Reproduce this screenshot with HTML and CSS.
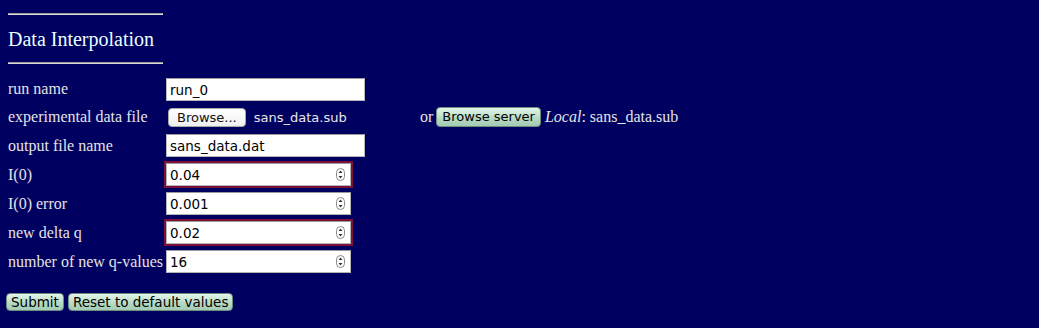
FILE: index.html
```html
<!DOCTYPE html>
<html lang="en">
    <head>
        <meta charset="UTF-8" />
        <title>Data Interpolation</title>
        <link rel="stylesheet" href="styles.css">
    </head>
    <body>
        <!-- 제목 -->
        <hr class="rule" />
        <h3 class="title">Data Interpolation</h3>
        <hr class="rule" />

        <!-- 입력폼 -->
        <form class="frm">
            <table class="tbl">
                <tr class="r1">
                    <td class="lb">run name</td>
                    <td><input type="text" class="txt" value="run_0" /></td>
                </tr>
                <tr class="r2">
                    <td class="lb">experimental data file</td>
                    <td>
                        <div class="filerow">
                            <span class="filebx">
                                <span class="btn-file">Browse...</span>
                                <span class="fname">sans_data.sub</span>
                            </span>
                            <span class="or">or</span>
                            <span class="btn-aqua">Browse server</span>
                            <span class="local"><i>Local</i>: sans_data.sub</span>
                        </div>
                    </td>
                </tr>
                <tr>
                    <td class="lb">output file name</td>
                    <td><input type="text" class="txt" value="sans_data.dat" /></td>
                </tr>
                <tr>
                    <td class="lb">I(0)</td>
                    <td>
                        <div class="numbx bad">
                            <input type="text" value="0.04" />
                            <svg class="spin" width="9" height="13" viewBox="0 0 9 13"><rect x="0.5" y="0.5" width="8" height="12" rx="4" fill="#fff" stroke="#888"/><path d="M2.5 5 L4.5 2.5 L6.5 5 Z M2.5 8 L4.5 10.5 L6.5 8 Z" fill="#333"/></svg>
                        </div>
                    </td>
                </tr>
                <tr>
                    <td class="lb">I(0) error</td>
                    <td>
                        <div class="numbx">
                            <input type="text" value="0.001" />
                            <svg class="spin" width="9" height="13" viewBox="0 0 9 13"><rect x="0.5" y="0.5" width="8" height="12" rx="4" fill="#fff" stroke="#888"/><path d="M2.5 5 L4.5 2.5 L6.5 5 Z M2.5 8 L4.5 10.5 L6.5 8 Z" fill="#333"/></svg>
                        </div>
                    </td>
                </tr>
                <tr>
                    <td class="lb">new delta q</td>
                    <td>
                        <div class="numbx bad">
                            <input type="text" value="0.02" />
                            <svg class="spin" width="9" height="13" viewBox="0 0 9 13"><rect x="0.5" y="0.5" width="8" height="12" rx="4" fill="#fff" stroke="#888"/><path d="M2.5 5 L4.5 2.5 L6.5 5 Z M2.5 8 L4.5 10.5 L6.5 8 Z" fill="#333"/></svg>
                        </div>
                    </td>
                </tr>
                <tr>
                    <td class="lb">number of new q-values</td>
                    <td>
                        <div class="numbx">
                            <input type="text" value="16" />
                            <svg class="spin" width="9" height="13" viewBox="0 0 9 13"><rect x="0.5" y="0.5" width="8" height="12" rx="4" fill="#fff" stroke="#888"/><path d="M2.5 5 L4.5 2.5 L6.5 5 Z M2.5 8 L4.5 10.5 L6.5 8 Z" fill="#333"/></svg>
                        </div>
                    </td>
                </tr>
            </table>

            <!-- 버튼 -->
            <div class="btns">
                <button type="button" class="btn-aqua">Submit</button>
                <button type="button" class="btn-aqua">Reset to default values</button>
            </div>
        </form>
    </body>
</html>
```

FILE: styles.css
```css
/* 전체 */
body {
    margin: 0;
    padding: 13px 8px 0;
    background-color: #000060;
    color: #e4e4e4;
    font-family: "Liberation Serif", "Times New Roman", serif;
    font-size: 16px;
}

/* 가로줄 */
.rule {
    width: 155px;
    height: 0;
    margin: 0;
    border: 0;
    border-top: 1px solid #9a9a9a;
    border-bottom: 1px solid #d8d8d8;
}

/* 제목 */
.title {
    margin: 13px 0 12px;
    font-size: 20px;
    font-weight: normal;
    line-height: 22px;
    color: #eaffff;
}

/* 테이블 */
.frm {
    margin-top: 11px;
}
.tbl {
    border-collapse: collapse;
}
.tbl td {
    padding: 0;
    height: 29px;
    vertical-align: middle;
}
.tbl tr.r1 td,
.tbl tr.r2 td {
    height: 28px;
}
.tbl td.lb {
    width: 158px;
    white-space: nowrap;
}

/* 텍스트 입력 */
.txt {
    box-sizing: border-box;
    width: 199px;
    height: 23px;
    margin: 0;
    padding: 1px 3px 0;
    border: 1px solid #b8b8b8;
    border-top-color: #9a9a9a;
    background: #fff;
    color: #000;
    font-family: "DejaVu Sans", sans-serif;
    font-size: 13.5px;
}

/* 파일 선택줄 */
.filerow {
    display: flex;
    align-items: center;
    white-space: nowrap;
}
.filebx {
    display: flex;
    align-items: center;
    width: 252px;
    padding-left: 2px;
}
.btn-file {
    box-sizing: border-box;
    height: 19px;
    padding: 0 8px;
    border: 1px solid #a8a8a8;
    border-radius: 4px;
    background: linear-gradient(#ffffff, #f0f0f0);
    color: #111;
    font-family: "DejaVu Sans", sans-serif;
    font-size: 13px;
    line-height: 17px;
}
.fname {
    margin-left: 8px;
    color: #e8e8e8;
    font-family: "DejaVu Sans", sans-serif;
    font-size: 13px;
}
.or {
    margin-right: 3px;
}
.local {
    margin-left: 4px;
}

/* 아쿠아 버튼 */
.btn-aqua {
    box-sizing: border-box;
    display: inline-block;
    height: 20px;
    margin: 0;
    padding: 0 5px;
    border: 1px solid #6c8c7c;
    border-radius: 4px;
    background: linear-gradient(#e4f6ea, #b4d8c2 60%, #a4cbb4);
    color: #000;
    font-family: "DejaVu Sans", sans-serif;
    font-size: 13px;
    line-height: 18px;
}

/* 숫자 입력 */
.numbx {
    box-sizing: border-box;
    display: flex;
    align-items: center;
    width: 185px;
    height: 23px;
    border: 1px solid #b4b4b4;
    border-top-color: #9a9a9a;
    background: #fff;
}
.numbx.bad {
    box-shadow: 0 0 0 2px #7c1038;
}
.numbx input {
    flex: 1;
    min-width: 0;
    margin: 0;
    padding: 1px 0 0 3px;
    border: 0;
    background: transparent;
    color: #000;
    font-family: "DejaVu Sans", sans-serif;
    font-size: 13.5px;
    outline: none;
}
.spin {
    margin-right: 5px;
}

/* 하단 버튼 */
.btns {
    display: flex;
    gap: 4px;
    margin-top: 17px;
    margin-left: -2px;
}
.btns .btn-aqua {
    height: 18px;
    padding: 0 4px;
    font-size: 13.5px;
    line-height: 16px;
}
```
